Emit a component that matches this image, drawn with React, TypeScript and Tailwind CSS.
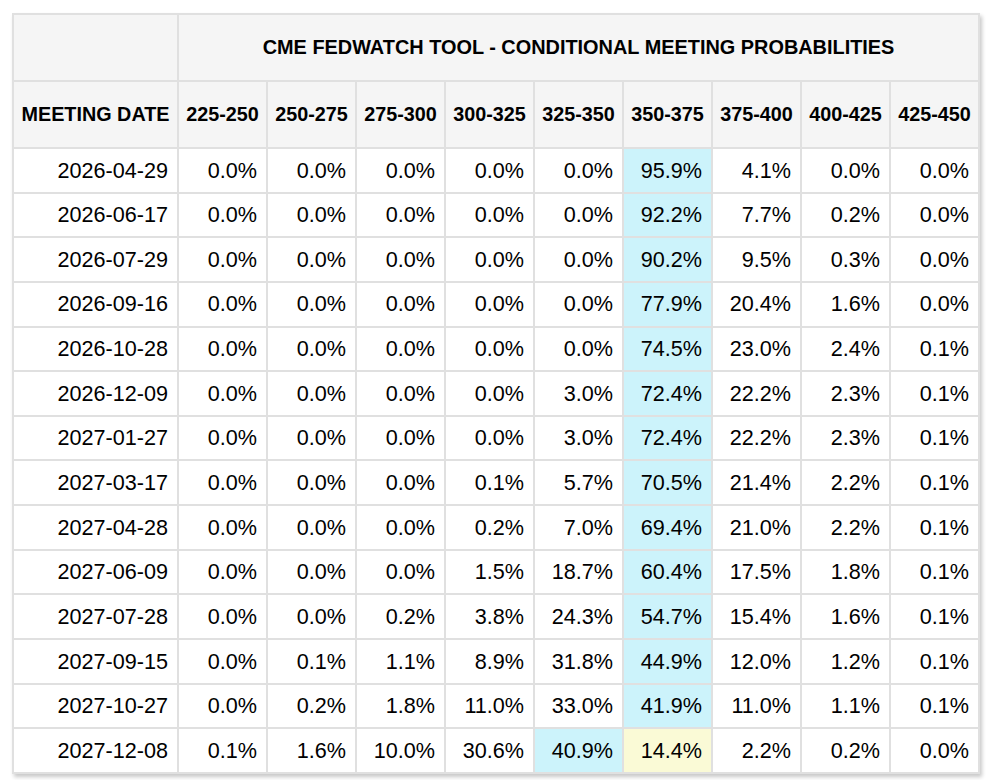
const ranges = ['225-250', '250-275', '275-300', '300-325', '325-350', '350-375', '375-400', '400-425', '425-450'];

const rows: [string, string[]][] = [
  ['2026-04-29', ['0.0%', '0.0%', '0.0%', '0.0%', '0.0%', '95.9%', '4.1%', '0.0%', '0.0%']],
  ['2026-06-17', ['0.0%', '0.0%', '0.0%', '0.0%', '0.0%', '92.2%', '7.7%', '0.2%', '0.0%']],
  ['2026-07-29', ['0.0%', '0.0%', '0.0%', '0.0%', '0.0%', '90.2%', '9.5%', '0.3%', '0.0%']],
  ['2026-09-16', ['0.0%', '0.0%', '0.0%', '0.0%', '0.0%', '77.9%', '20.4%', '1.6%', '0.0%']],
  ['2026-10-28', ['0.0%', '0.0%', '0.0%', '0.0%', '0.0%', '74.5%', '23.0%', '2.4%', '0.1%']],
  ['2026-12-09', ['0.0%', '0.0%', '0.0%', '0.0%', '3.0%', '72.4%', '22.2%', '2.3%', '0.1%']],
  ['2027-01-27', ['0.0%', '0.0%', '0.0%', '0.0%', '3.0%', '72.4%', '22.2%', '2.3%', '0.1%']],
  ['2027-03-17', ['0.0%', '0.0%', '0.0%', '0.1%', '5.7%', '70.5%', '21.4%', '2.2%', '0.1%']],
  ['2027-04-28', ['0.0%', '0.0%', '0.0%', '0.2%', '7.0%', '69.4%', '21.0%', '2.2%', '0.1%']],
  ['2027-06-09', ['0.0%', '0.0%', '0.0%', '1.5%', '18.7%', '60.4%', '17.5%', '1.8%', '0.1%']],
  ['2027-07-28', ['0.0%', '0.0%', '0.2%', '3.8%', '24.3%', '54.7%', '15.4%', '1.6%', '0.1%']],
  ['2027-09-15', ['0.0%', '0.1%', '1.1%', '8.9%', '31.8%', '44.9%', '12.0%', '1.2%', '0.1%']],
  ['2027-10-27', ['0.0%', '0.2%', '1.8%', '11.0%', '33.0%', '41.9%', '11.0%', '1.1%', '0.1%']],
  ['2027-12-08', ['0.1%', '1.6%', '10.0%', '30.6%', '40.9%', '14.4%', '2.2%', '0.2%', '0.0%']],
];

// which cell in each row carries the highlight colour
function cellBg(rowIdx: number, colIdx: number) {
  const last = rowIdx === rows.length - 1;
  if (last) {
    if (colIdx === 4) return 'bg-[#ccf3fb]';
    if (colIdx === 5) return 'bg-[#fafad6]';
    return 'bg-white';
  }
  return colIdx === 5 ? 'bg-[#ccf3fb]' : 'bg-white';
}

export default function App() {
  return (
    <div className="w-[986px] h-[780px] bg-white pl-[12px] pt-[13px] font-['Liberation_Sans',Arial,sans-serif] text-black">
      <div className="w-fit shadow-[2px_3px_4px_rgba(0,0,0,0.22)]">
        <table className="table-fixed border-collapse w-[966px]">
          <colgroup>
            <col className="w-[165px]" />
            {ranges.map(r => (
              <col key={r} className="w-[89px]" />
            ))}
          </colgroup>
          <thead>
            <tr className="h-[67px] bg-[#f5f5f5]">
              <th className="border-2 border-[#e0e0e0]" />
              <th colSpan={9} className="border-2 border-[#e0e0e0] text-center text-[19.9px] font-bold">
                CME FEDWATCH TOOL - CONDITIONAL MEETING PROBABILITIES
              </th>
            </tr>
            <tr className="h-[67px] bg-[#f5f5f5]">
              <th className="border-2 border-[#e0e0e0] text-center text-[19.8px] font-bold whitespace-nowrap">MEETING DATE</th>
              {ranges.map(r => (
                <th key={r} className="border-2 border-[#e0e0e0] text-center text-[19.8px] font-bold whitespace-nowrap">
                  {r}
                </th>
              ))}
            </tr>
          </thead>
          <tbody>
            {rows.map(([date, vals], i) => (
              <tr key={date} className="h-[44.65px]">
                <td className="border-2 border-[#e0e0e0] bg-white text-right pr-[9px] text-[21.6px] leading-none">{date}</td>
                {vals.map((v, j) => (
                  <td key={j} className={`border-2 border-[#e0e0e0] text-right pr-[9px] text-[21.6px] leading-none ${cellBg(i, j)}`}>
                    {v}
                  </td>
                ))}
              </tr>
            ))}
          </tbody>
        </table>
      </div>
    </div>
  );
}
